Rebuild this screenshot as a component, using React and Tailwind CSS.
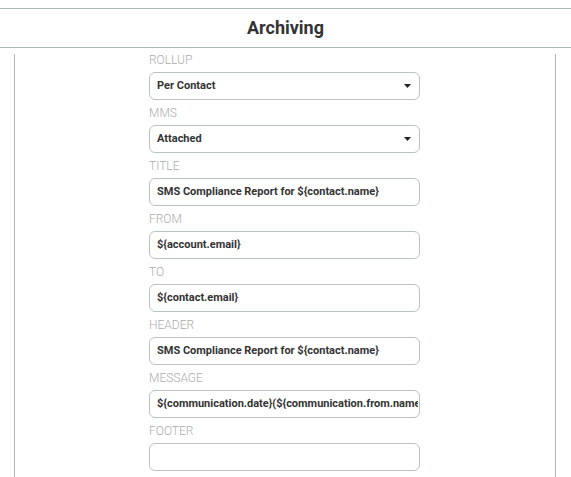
import React from "react";

const fields = [
  { label: "Rollup", value: "Per Contact", select: true },
  { label: "MMS", value: "Attached", select: true },
  { label: "Title", value: "SMS Compliance Report for ${contact.name}" },
  { label: "From", value: "${account.email}" },
  { label: "To", value: "${contact.email}" },
  { label: "Header", value: "SMS Compliance Report for ${contact.name}" },
  { label: "Message", value: "${communication.date}(${communication.from.name}): ${communication.body}" },
  { label: "Footer", value: "" },
];

function Caret() {
  return (
    <svg width="7" height="4" viewBox="0 0 7 4" className="shrink-0">
      <path d="M0 0h7L3.5 4z" fill="#222" />
    </svg>
  );
}

export default function App() {
  return (
    <div className="h-[477px] overflow-hidden bg-white font-['Roboto',sans-serif] text-[#333]">
      {/* title bar */}
      <div className="mt-2 h-[40px] border-y border-[#aab7b2] flex items-center justify-center">
        <h1 className="text-[18px] font-bold leading-none">Archiving</h1>
      </div>

      {/* form panel */}
      <div className="mt-[6px] mx-[14px] w-[542px] h-[500px] border-x border-[#aab7b2]">
        <div className="w-[271px] ml-[134px]">
          {fields.map((f) => (
            <div key={f.label} className="mb-[7px]">
              <div className="h-[18px] text-[12px] font-light uppercase text-[#acacac] leading-[12px]">
                {f.label}
              </div>
              <div
                className={
                  f.select
                    ? "h-[28px] rounded-[6px] border border-[#b9c3c0] flex items-center pl-[7px] pr-[8px] gap-2"
                    : "h-[28px] rounded-[6px] border border-[#b9c3c0] flex items-center pl-[7px] pr-[1px]"
                }
              >
                <span className="flex-1 whitespace-nowrap overflow-hidden text-[11px] font-bold text-[#333]">
                  {f.value}
                </span>
                {f.select && <Caret />}
              </div>
            </div>
          ))}
        </div>
      </div>
    </div>
  );
}
